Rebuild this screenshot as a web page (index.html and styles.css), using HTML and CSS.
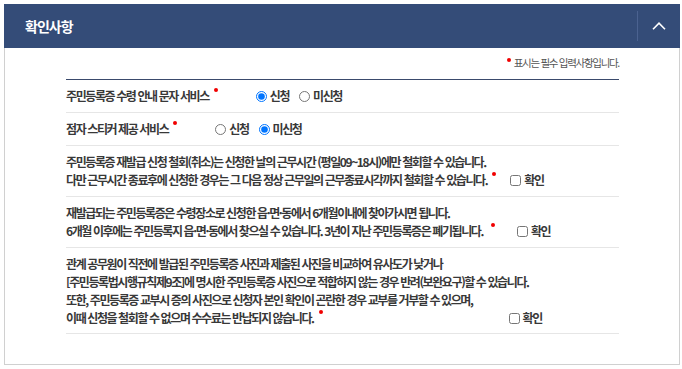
FILE: index.html
```html
<!DOCTYPE html>
<html lang="ko">
<head>
<meta charset="utf-8">
<title>확인사항</title>
<link rel="stylesheet" href="styles.css">
</head>
<body>
<section class="panel">
  <header class="panel-head">
    <h2 class="panel-title">확인사항</h2>
    <button class="toggle" type="button" aria-label="접기">
      <svg width="14" height="8" viewBox="0 0 14 8"><path d="M1 7.2 L7 1.2 L13 7.2" fill="none" stroke="#fff" stroke-width="1.6"/></svg>
    </button>
  </header>
  <div class="panel-body">
    <div class="inner">
      <p class="note"><span class="req"></span> 표시는 필수 입력사항입니다.</p>
      <ul class="rows">
        <li class="row">
          <span class="label">주민등록증 수령 안내 문자 서비스</span><span class="req"></span>
          <span class="choices">
            <label class="opt"><input type="radio" name="sms" checked>신청</label>
            <label class="opt"><input type="radio" name="sms">미신청</label>
          </span>
        </li>
        <li class="row">
          <span class="label">점자 스티커 제공 서비스</span><span class="req"></span>
          <span class="choices">
            <label class="opt"><input type="radio" name="braille">신청</label>
            <label class="opt"><input type="radio" name="braille" checked>미신청</label>
          </span>
        </li>
        <li class="row">
          주민등록증 재발급 신청 철회(취소)는 신청한 날의 근무시간 (평일09~18시)에만 철회할 수 있습니다.<br>
          다만 근무시간 종료후에 신청한 경우는 그 다음 정상 근무일의 근무종료시각까지 철회할 수 있습니다.<span class="req"></span><label class="check check-a"><input type="checkbox">확인</label>
        </li>
        <li class="row">
          재발급되는 주민등록증은 수령장소로 신청한 읍·면·동에서 6개월이내에 찾아가시면 됩니다.<br>
          6개월 이후에는 주민등록지 읍·면·동에서 찾으실 수 있습니다. 3년이 지난 주민등록증은 폐기됩니다.<span class="req req-b"></span><label class="check check-b"><input type="checkbox">확인</label>
        </li>
        <li class="row row-last">
          관계 공무원이 직전에 발급된 주민등록증 사진과 제출된 사진을 비교하여 유사도가 낮거나<br>
          [주민등록법시행규칙제9조]에 명시한 주민등록증 사진으로 적합하지 않는 경우 반려(보완요구)할 수 있습니다.<br>
          또한, 주민등록증 교부시 증의 사진으로 신청자 본인 확인이 곤란한 경우 교부를 거부할 수 있으며,<br>
          이때 신청을 철회할 수 없으며 수수료는 반납되지 않습니다.<span class="req"></span><label class="check check-c"><input type="checkbox">확인</label>
        </li>
      </ul>
    </div>
  </div>
</section>
</body>
</html>
```
FILE: styles.css
```css
* { box-sizing: border-box; }
html, body { margin: 0; padding: 0; background: #fff; }
body {
  padding: 4px 2px 0 4px;
  font-family: "Noto Sans CJK KR", "Noto Sans", sans-serif;
  color: #333;
}
.panel { width: 676px; }
.panel-head {
  height: 44px;
  background: #344c78;
  display: flex;
  align-items: center;
  justify-content: space-between;
}
.panel-title {
  margin: 0 0 0 21px;
  font-size: 14px;
  font-weight: 700;
  letter-spacing: -1px;
  color: #fff;
}
.toggle {
  width: 43px;
  height: 30px;
  border: 0;
  border-left: 1px solid #4b6290;
  background: transparent;
  padding: 0;
  display: flex;
  align-items: center;
  justify-content: center;
}
.panel-body {
  border: 1px solid #d0d0d0;
  border-top: 0;
  height: 317px;
}
.inner { margin: 0 60px 0 61px; }
.note {
  margin: 0;
  height: 31px;
  padding-top: 8px;
  text-align: right;
  font-size: 10.5px;
  line-height: 14px;
  letter-spacing: -1.3px;
  color: #555;
}
.rows {
  list-style: none;
  margin: 0;
  padding: 0;
  border-top: 1px solid #3a4a6c;
}
.row {
  border-bottom: 1px solid #e6e6e6;
  padding: 7px 0;
  font-size: 12px;
  line-height: 18px;
  font-weight: 700;
  letter-spacing: -1.4px;
  color: #383838;
}
.row-last { padding: 7px 0 6px; }
.req {
  display: inline-block;
  width: 4px;
  height: 4px;
  border-radius: 50%;
  background: #f00000;
  vertical-align: top;
  margin: 1px 0 0 5px;
}
.req-b { margin-left: 8px; }
.note .req { margin: 2px 1px 0 0; }
.choices { margin-left: 36px; }
.opt, .check {
  display: inline-flex;
  align-items: center;
  height: 18px;
  vertical-align: top;
}
.opt + .opt { margin-left: 8px; }
.opt input, .check input {
  width: 11px;
  height: 11px;
  margin: 0 3px 0 0;
}
.check-a { margin-left: 14px; }
.check-b { margin-left: 22px; }
.check-c { margin-left: 186px; }
```
